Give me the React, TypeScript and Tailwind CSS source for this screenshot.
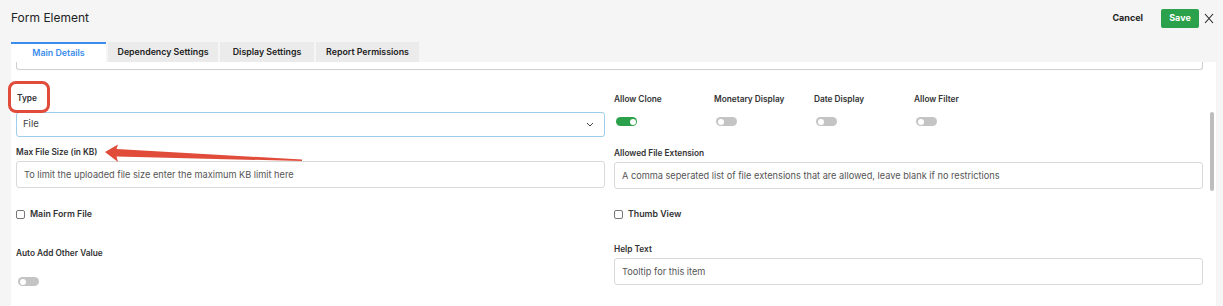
import React from "react";

function Toggle({ on = false }: { on?: boolean }) {
  return (
    <div
      className={
        "w-[21px] h-[9px] rounded-full flex items-center px-[1.5px] " +
        (on ? "bg-[#2aa14a] justify-end" : "bg-[#c4c4c4] justify-start")
      }
    >
      <div className="w-[6px] h-[6px] rounded-full bg-white" />
    </div>
  );
}

function Label({ children, className = "" }: { children: React.ReactNode; className?: string }) {
  return (
    <div className={"text-[8.3px] leading-[12px] font-semibold text-[#333] " + className}>{children}</div>
  );
}

function Input({ text, className = "" }: { text: string; className?: string }) {
  return (
    <div
      className={
        "h-[27px] border border-[#d9d9d9] rounded-[3px] flex items-center pl-[7px] text-[9.2px] text-[#555] " +
        className
      }
    >
      {text}
    </div>
  );
}

function Check({ label }: { label: string }) {
  return (
    <div className="flex items-center h-[12px] gap-[5px]">
      <div className="w-[9px] h-[9px] border border-[#777] rounded-[2px] bg-white" />
      <span className="text-[8.8px] font-semibold text-[#333]">{label}</span>
    </div>
  );
}

export default function App() {
  return (
    <div className="w-[1223px] h-[306px] bg-[#f5f5f5] overflow-hidden relative font-['Inter',sans-serif]">
      {/* Header */}
      <div className="h-[36px] flex items-center justify-between pl-[11px] pr-[9px]">
        <div className="text-[12px] text-[#222]">Form Element</div>
        <div className="flex items-center">
          <div className="text-[9px] font-bold text-[#222] mr-[18px]">Cancel</div>
          <div className="w-[38px] h-[19px] rounded-[2px] bg-[#2aa14a] text-white text-[9px] font-bold flex items-center justify-center">
            Save
          </div>
          <svg width="10" height="11" viewBox="0 0 10 11" className="ml-[5px]">
            <path d="M1 1 L9 10 M9 1 L1 10" stroke="#222" strokeWidth="1.1" fill="none" />
          </svg>
        </div>
      </div>

      {/* Tabs */}
      <div className="mt-[6px] pl-[11px] flex gap-[2px] h-[20px]">
        <div className="w-[95px] h-[20px] bg-white border-t-2 border-[#3b8ded] text-[#3b8ded] text-[8.8px] font-semibold flex items-center justify-center">
          Main Details
        </div>
        <div className="w-[110px] h-[20px] bg-[#ebebeb] text-[#222] text-[8.8px] font-semibold flex items-center justify-center">
          Dependency Settings
        </div>
        <div className="w-[94px] h-[20px] bg-[#ebebeb] text-[#222] text-[8.8px] font-semibold flex items-center justify-center">
          Display Settings
        </div>
        <div className="w-[103px] h-[20px] bg-[#ebebeb] text-[#222] text-[8.8px] font-semibold flex items-center justify-center">
          Report Permissions
        </div>
      </div>

      {/* Panel */}
      <div className="ml-[11px] w-[1205px] h-[244px] bg-white relative overflow-hidden">
        <div className="pl-[5px] pr-[13px]">
          <div className="h-[8px] border border-t-0 border-[#cfcfcf] rounded-b-[3px]" />
          <div className="grid grid-cols-2 gap-[9px]">
            {/* Left column */}
            <div className="flex flex-col">
              <Label className="mt-[22px] pl-[1px]">Type</Label>
              <div className="mt-[8px] h-[25px] border border-[#9fcdec] rounded-[3px] flex items-center justify-between pl-[6px] pr-[10px] text-[9.5px] text-[#444]">
                <span>File</span>
                <svg width="8" height="5" viewBox="0 0 8 5">
                  <path d="M1 1 L4 4 L7 1" stroke="#444" strokeWidth="1" fill="none" />
                </svg>
              </div>
              <Label className="mt-[9px]">Max File Size (in KB)</Label>
              <Input className="mt-[3px]" text="To limit the uploaded file size enter the maximum KB limit here" />
              <div className="mt-[20px]">
                <Check label="Main Form File" />
              </div>
              <Label className="mt-[27px]">Auto Add Other Value</Label>
              <div className="mt-[18px] pl-[2px]">
                <Toggle />
              </div>
            </div>
            {/* Right column */}
            <div className="flex flex-col">
              <div className="mt-[23px] grid grid-cols-[100px_100px_100px_100px]">
                <Label>Allow Clone</Label>
                <Label>Monetary Display</Label>
                <Label>Date Display</Label>
                <Label>Allow Filter</Label>
              </div>
              <div className="mt-[12px] grid grid-cols-[100px_100px_100px_100px] pl-[2px]">
                <Toggle on />
                <Toggle />
                <Toggle />
                <Toggle />
              </div>
              <Label className="mt-[21px]">Allowed File Extension</Label>
              <Input
                className="mt-[3px]"
                text="A comma seperated list of file extensions that are allowed, leave blank if no restrictions"
              />
              <div className="mt-[19px]">
                <Check label="Thumb View" />
              </div>
              <Label className="mt-[23px]">Help Text</Label>
              <Input className="mt-[3px]" text="Tooltip for this item" />
            </div>
          </div>
        </div>
        {/* scrollbar */}
        <div className="absolute left-[1199px] top-[50px] w-[4px] h-[79px] rounded-full bg-[#bdbdbd]" />
      </div>

      {/* Annotations */}
      <div className="absolute left-[8px] top-[81px] w-[42px] h-[32px] border-[3px] border-[#e14b3a] rounded-[8px]" />
      <svg className="absolute left-0 top-0" width="1223" height="306" viewBox="0 0 1223 306">
        <polygon points="105,152 118,144.5 116.5,149 302,159.5 302,161 116.5,156.5 118,162" fill="#e14b3a" />
      </svg>
    </div>
  );
}
